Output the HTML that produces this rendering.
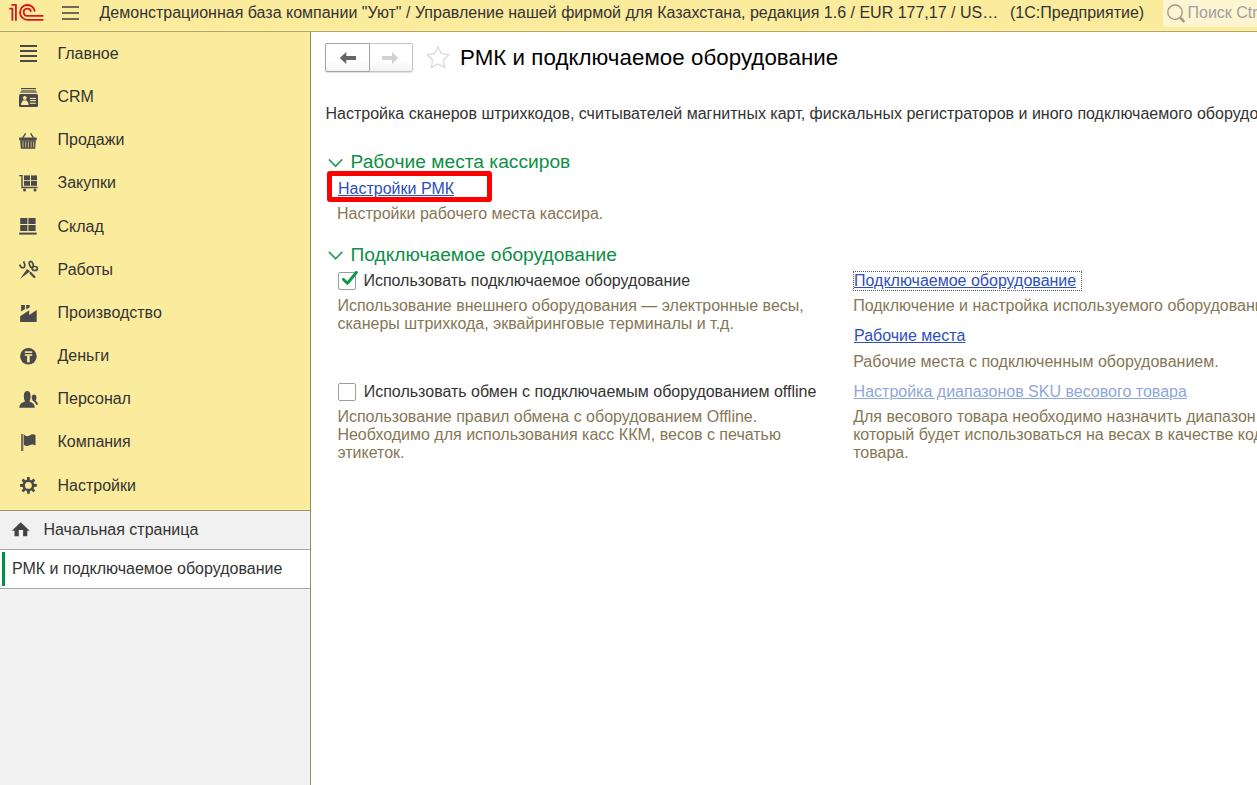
<!DOCTYPE html>
<html><head><meta charset="utf-8">
<style>
*{margin:0;padding:0;box-sizing:border-box}
html,body{width:1257px;height:785px;overflow:hidden;background:#fff}
body{position:relative;font-family:"Liberation Sans",sans-serif;font-size:16px;line-height:18px;color:#333}
.a{position:absolute;white-space:nowrap}
#hdr{position:absolute;left:0;top:0;width:1257px;height:32px;background:#FBEB9D}
#hdrhl{position:absolute;left:0;top:30px;width:1257px;height:1px;background:#FDF09F}
#hdrb{position:absolute;left:0;top:31px;width:1257px;height:1px;background:#B0A36B}
#side{position:absolute;left:0;top:32px;width:310px;height:753px;background:#F1F1F1}
#sideb{position:absolute;left:310px;top:32px;width:1px;height:753px;background:#998E5C}
#sec{position:absolute;left:0;top:32px;width:310px;height:478px;background:#FBEB9D}
.si{position:absolute;left:57.5px;color:#333}
svg.ic{position:absolute;left:0;top:0;overflow:visible}
.desc{color:#857754}
.lnk{color:#2D4FB9;text-decoration:underline;text-underline-offset:1px}
</style></head><body>
<div id="hdr"></div>
<div id="hdrhl"></div>
<div id="hdrb"></div>
<svg class="ic" width="1257" height="32">
  <g fill="none" stroke="#D8141D" stroke-width="1.8">
    <path d="M9.2 8.7 H12.4 V20.7"/>
    <path d="M11.5 4.9 H15.9 V20.7"/>
    <path d="M34.8 11.7 A7.4 7.4 0 1 0 27.4 19.8 H43.4"/>
    <path d="M30.9 11.9 A3.6 3.6 0 1 0 27.4 15.9 H43.4"/>
  </g>
  <g fill="#6E6A55">
    <rect x="62" y="6" width="17" height="2"/>
    <rect x="62" y="12" width="17" height="2"/>
    <rect x="62" y="18" width="17" height="2"/>
  </g>
</svg>
<div class="a" style="left:99.5px;top:3.7px;color:#333">Демонстрационная база компании "Уют" / Управление нашей фирмой для Казахстана, редакция 1.6 / EUR 177,17 / US…</div>
<div class="a" style="left:1010px;top:3.7px;color:#333">(1С:Предприятие)</div>
<div class="a" style="left:1163px;top:0;width:94px;height:27px;background:#FDF5D2;border-bottom-left-radius:3px"></div>
<svg class="ic" width="1257" height="32">
  <circle cx="1175" cy="12.2" r="7.2" fill="none" stroke="#9C9882" stroke-width="1.4"/>
  <path d="M1180.2 17.6 L1184.3 21.8" stroke="#9C9882" stroke-width="2.6"/>
</svg>
<div class="a" style="left:1187.5px;top:4.4px;color:#A0A0A0">Поиск Ctrl+F</div>

<div id="side"></div>
<div id="sec"></div>
<div id="sideb"></div>
<div class="a" style="left:0;top:509px;width:310px;height:1px;background:#FDF2A0"></div>
<div class="a" style="left:0;top:510px;width:310px;height:1px;background:#9A8F60"></div>
<div class="a" style="left:0;top:511px;width:310px;height:1px;background:#F7F7F9"></div>
<div class="a" style="left:0;top:548px;width:310px;height:1px;background:#F7F7F7"></div>
<div class="a" style="left:0;top:549px;width:310px;height:1px;background:#A2A2A2"></div>
<div class="a" style="left:0;top:550px;width:310px;height:38px;background:#fff"></div>
<div class="a" style="left:0;top:588px;width:310px;height:1px;background:#A5A5A5"></div>
<div class="a" style="left:0;top:589px;width:310px;height:1px;background:#F7F7F7"></div>
<div class="a" style="left:2px;top:552px;width:3px;height:34px;background:#00933D"></div>

<div class="si" style="top:45.01px">Главное</div>
<div class="si" style="top:88.18px">CRM</div>
<div class="si" style="top:131.35px">Продажи</div>
<div class="si" style="top:173.5px">Закупки</div>
<div class="si" style="top:217.69px">Склад</div>
<div class="si" style="top:260.86px">Работы</div>
<div class="si" style="top:304.03px">Производство</div>
<div class="si" style="top:347.2px">Деньги</div>
<div class="si" style="top:390.37px">Персонал</div>
<div class="si" style="top:433.0px">Компания</div>
<div class="si" style="top:476.71px">Настройки</div>
<div class="a" style="left:43.5px;top:520.5px;color:#333">Начальная страница</div>
<div class="a" style="left:12px;top:560px;color:#333">РМК и подключаемое оборудование</div>

<svg class="ic" width="311" height="785">
  <g fill="#4A4A4A">
    <!-- Главное -->
    <rect x="20" y="45" width="17" height="2"/>
    <rect x="20" y="50" width="17" height="2"/>
    <rect x="20" y="55" width="17" height="2"/>
    <rect x="20" y="60" width="17" height="2"/>
    <!-- CRM -->
    <rect x="21" y="88" width="15" height="1.2"/>
    <path d="M20 93 L21.5 90 H35.5 L37.5 93 Z" fill="#8C8468"/>
    <rect x="19" y="94" width="19" height="13" rx="1.5"/>
    <!-- Продажи basket -->
    <path d="M25.6 133.3 L22.7 137.8 M30.6 133.3 L33.5 137.8" stroke="#4A4A4A" stroke-width="1.3" fill="none"/>
    <rect x="19.2" y="137.5" width="17.5" height="2.8"/>
    <path d="M20.2 140.3 H35.8 L35.2 148.7 H20.8 Z"/>
    <!-- Закупки cart -->
    <path d="M19.2 175.6 H22 V187.5 H37.6" stroke="#4A4A4A" stroke-width="1.4" fill="none"/>
    <rect x="24" y="175.4" width="6" height="4.8"/>
    <rect x="31" y="175.4" width="6" height="4.8"/>
    <rect x="24" y="181" width="6" height="4.8"/>
    <rect x="31" y="181" width="6" height="4.8"/>
    <circle cx="24.5" cy="190" r="1.5"/>
    <circle cx="35" cy="190" r="1.5"/>
    <!-- Склад -->
    <rect x="20.2" y="218" width="7.2" height="6"/>
    <rect x="28.4" y="218" width="7.2" height="6"/>
    <rect x="20.2" y="225" width="7.2" height="6"/>
    <rect x="28.4" y="225" width="7.2" height="6"/>
    <rect x="19.2" y="232.6" width="17.5" height="2"/>
    <!-- Производство -->
    <path d="M20.1 321.9 V316.2 L29.2 310.3 V314.9 L36.7 309.9 V321.9 Z"/>
    <path d="M21.1 305 H24.9 V309.3 L21.1 311.6 Z"/>
    <path d="M26.1 305 H29.7 V307.2 L26.1 309.5 Z"/>
    <!-- Компания -->
    <rect x="21" y="434" width="2.4" height="17" fill="#7A7258"/>
    <path d="M23.9 434.5 Q26.5 437.5 29.5 435.5 Q32.5 433.5 35.5 435 V445.5 Q32.5 443.8 29.5 445.3 Q26.5 447 23.9 444.8 Z"/>
    <!-- Home -->
    <path d="M20.75 522.2 L29.6 530.7 H27.3 V536.3 H23.1 V530 H18.8 V536.3 H14.5 V530.7 H11.9 Z" fill="#444"/>
  </g>
  <!-- CRM person & lines cutout -->
  <g fill="#FBEB9D">
    <circle cx="24.8" cy="97.9" r="1.9"/>
    <path d="M21 104.9 Q21.2 100.4 24.8 100.3 Q28.4 100.4 28.6 104.9 Z"/>
    <rect x="29.9" y="97.9" width="6" height="1.1"/>
    <rect x="29.9" y="100.1" width="6" height="1.1"/>
    <rect x="29.9" y="102.7" width="6" height="1.1"/>
  </g>
  <!-- basket slits -->
  <g fill="#C9BD7E">
    <rect x="22.5" y="141.5" width="1" height="6"/>
    <rect x="25.2" y="141.5" width="1" height="6"/>
    <rect x="27.9" y="141.5" width="1" height="6"/>
    <rect x="30.6" y="141.5" width="1" height="6"/>
    <rect x="33.2" y="141.5" width="1" height="6"/>
  </g>
  <!-- Работы tools -->
  <g fill="none" stroke="#4A4A4A" stroke-width="1.7">
    <path d="M19.6 264.6 Q21 268.4 23.6 267.6 Q26 266.8 23.6 261.4"/>
    <ellipse cx="31.3" cy="264.5" rx="1.8" ry="3.1" transform="rotate(-20 31.3 264.5)"/>
    <ellipse cx="34.8" cy="268.5" rx="2.6" ry="2" />
  </g>
  <path d="M20.2 278.8 L27 268.9 L30.2 271.2 Z" fill="#4A4A4A"/>
  <path d="M30.5 273 L34.4 277" stroke="#4A4A4A" stroke-width="2.2" stroke-linecap="round"/>
  <!-- Деньги -->
  <circle cx="28.4" cy="356.3" r="8.3" fill="#4A4A4A"/>
  <g fill="#FBEB9D">
    <rect x="24.8" y="351.3" width="7.4" height="1.6"/>
    <rect x="24.8" y="354.2" width="7.4" height="1.6"/>
    <rect x="27.1" y="355.5" width="2.6" height="6.8"/>
  </g>
  <!-- Персонал -->
  <g fill="#4A4A4A">
    <path d="M32.6 400.5 Q31.3 397.5 31.8 396 Q32.5 394.4 34.2 394.5 Q36 394.6 36.4 396.6 Q36.8 398.8 35.6 400.8 Q37.8 402 37.9 404.8 L36.5 405 Q35 401.8 32.6 400.5 Z"/>
    <path d="M19.2 407.8 Q19.5 403 25 401.6 Q23.8 399.5 23.8 396 Q24 391 27.2 391 Q30.4 391 30.6 396 Q30.6 399.5 29.4 401.6 Q34.6 403 34.8 407.8 Z"/>
  </g>
  <!-- Настройки gear -->
  <g transform="translate(28.4 485.4)">
    <g fill="#4A4A4A">
      <path d="M-1.3 -8.4 H1.3 L1.6 -4 H-1.6 Z"/>
      <path d="M-1.3 -8.4 H1.3 L1.6 -4 H-1.6 Z" transform="rotate(45)"/>
      <path d="M-1.3 -8.4 H1.3 L1.6 -4 H-1.6 Z" transform="rotate(90)"/>
      <path d="M-1.3 -8.4 H1.3 L1.6 -4 H-1.6 Z" transform="rotate(135)"/>
      <path d="M-1.3 -8.4 H1.3 L1.6 -4 H-1.6 Z" transform="rotate(180)"/>
      <path d="M-1.3 -8.4 H1.3 L1.6 -4 H-1.6 Z" transform="rotate(225)"/>
      <path d="M-1.3 -8.4 H1.3 L1.6 -4 H-1.6 Z" transform="rotate(270)"/>
      <path d="M-1.3 -8.4 H1.3 L1.6 -4 H-1.6 Z" transform="rotate(315)"/>
      <circle r="5.9"/>
    </g>
    <circle r="3.4" fill="#FBEB9D"/>
  </g>
</svg>

<!-- content -->
<div class="a" style="left:325px;top:43px;width:88px;height:29px;border-radius:2px;background:linear-gradient(#fff,#fff 60%,#f1f1f1);box-shadow:0 1px 1px rgba(0,0,0,0.12)"></div>
<div class="a" style="left:369px;top:43px;width:44px;height:29px;border:1px solid #C4C4C4;border-left:none;border-radius:0 2px 2px 0"></div>
<div class="a" style="left:325px;top:43px;width:45px;height:29px;border:1px solid #A3A3A3;border-radius:2px 0 0 2px"></div>
<svg class="ic" width="1257" height="785">
  <path d="M339.7 58 L346.3 51.9 V56.1 H356 V59.9 H346.3 V64 Z" fill="#666"/>
  <path d="M398.3 58 L392 51.9 V56.1 H382 V59.9 H392 V64 Z" fill="#D2D2D2"/>
  <path transform="translate(0 0.7)" d="M438.0 46.4 L441.4 53.0 L448.7 54.1 L443.4 59.4 L444.6 66.7 L438.0 63.3 L431.4 66.7 L432.6 59.4 L427.3 54.1 L434.6 53.0 Z" fill="none" stroke="#DCDCDC" stroke-width="1.4" stroke-linejoin="miter"/>
  <!-- chevrons -->
  <path d="M328.9 159.4 L335.6 166.2 L342.3 159.4" fill="none" stroke="#2FA060" stroke-width="1.7"/>
  <path d="M328.9 251.9 L335.6 258.7 L342.3 251.9" fill="none" stroke="#2FA060" stroke-width="1.7"/>
  <!-- checkmark -->
  <path d="M343.4 279.4 L347.4 283.4 L356.4 272.4" fill="none" stroke="#0E9A47" stroke-width="2.6" stroke-linecap="round" stroke-linejoin="round"/>
</svg>
<div class="a" style="left:460px;top:44.5px;font-size:22.3px;letter-spacing:0.05px;line-height:26px;color:#000">РМК и подключаемое оборудование</div>
<div class="a" style="left:325.5px;top:105.3px">Настройка сканеров штрихкодов, считывателей магнитных карт, фискальных регистраторов и иного подключаемого оборудования</div>
<div class="a" style="left:350.5px;top:150.6px;font-size:19.2px;line-height:22px;color:#0D8F45">Рабочие места кассиров</div>
<div class="a" style="left:327px;top:171px;width:165px;height:30.5px;border:5px solid #FF0000;border-radius:3px"></div>
<div class="a lnk" style="left:338px;top:180px">Настройки РМК</div>
<div class="a desc" style="left:337px;top:205.2px">Настройки рабочего места кассира.</div>
<div class="a" style="left:350.5px;top:243.8px;font-size:19.2px;line-height:22px;color:#0D8F45">Подключаемое оборудование</div>
<div class="a" style="left:338px;top:272px;width:18px;height:18px;border:1px solid #9C9C9C;border-radius:2px"></div>
<svg class="ic" width="1257" height="785">
  <path d="M343.4 279.4 L347.4 283.4 L356.4 272.4" fill="none" stroke="#0E9A47" stroke-width="2.6" stroke-linecap="round" stroke-linejoin="round"/>
</svg>
<div class="a" style="left:363.4px;top:272.2px">Использовать подключаемое оборудование</div>
<div class="a desc" style="left:337.4px;top:297.1px">Использование внешнего оборудования — электронные весы,<br>сканеры штрихкода, эквайринговые терминалы и т.д.</div>
<div class="a" style="left:338px;top:383px;width:18px;height:18px;border:1px solid #9C9C9C;border-radius:2px"></div>
<div class="a" style="left:363.7px;top:383.3px">Использовать обмен с подключаемым оборудованием offline</div>
<div class="a desc" style="left:337.4px;top:407.9px">Использование правил обмена с оборудованием Offline.<br>Необходимо для использования касс ККМ, весов с печатью<br>этикеток.</div>
<div class="a" style="left:853px;top:271px;width:229px;height:20px;border:1px dotted #555"></div>
<div class="a lnk" style="left:854px;top:272.1px">Подключаемое оборудование</div>
<div class="a desc" style="left:853.2px;top:297.2px">Подключение и настройка используемого оборудования.</div>
<div class="a lnk" style="left:854px;top:326.7px">Рабочие места</div>
<div class="a desc" style="left:853.2px;top:352.9px">Рабочие места с подключенным оборудованием.</div>
<div class="a lnk" style="left:853.6px;top:382.7px;color:#8FA7D9">Настройка диапазонов SKU весового товара</div>
<div class="a desc" style="left:853.2px;top:407.9px">Для весового товара необходимо назначить диапазон SKU,<br>который будет использоваться на весах в качестве кода<br>товара.</div>
</body></html>
